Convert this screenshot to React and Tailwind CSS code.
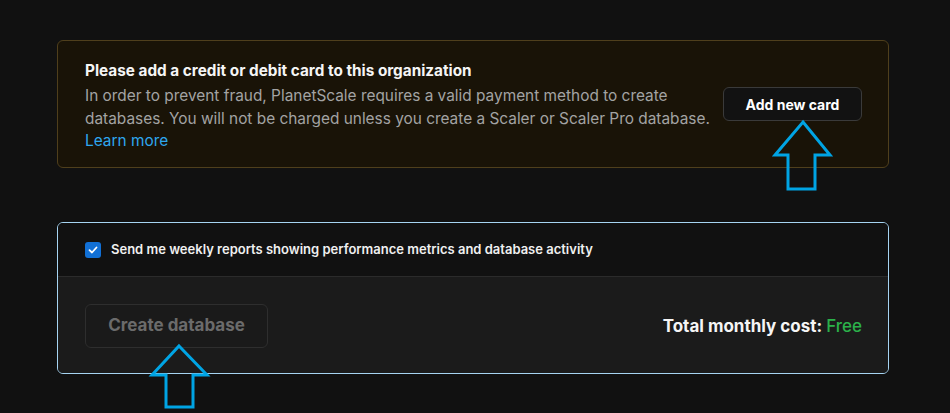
import React from "react";

function Arrow({ className, points }) {
  return (
    <svg className={className} width="950" height="413" viewBox="0 0 950 413" fill="none">
      <polygon points={points} stroke="#00a4e4" strokeWidth="3" strokeLinejoin="miter" />
    </svg>
  );
}

export default function App() {
  return (
    <div
      className="relative w-[950px] h-[413px] bg-[#111111] overflow-hidden text-white"
      style={{ fontFamily: "Inter, 'Noto Sans', sans-serif" }}
    >
      <div className="ml-[57px] w-[832px] pt-[40px] flex flex-col gap-[54px]">
        <div className="h-[128px] flex items-start justify-between rounded-md border border-[#4f3f1c] bg-[#191307] pl-[27px] pr-[26px] pt-[20px]">
          <div className="flex flex-col">
            <div className="text-[15.3px] leading-[20px] font-bold text-[#f5f5f5]">
              Please add a credit or debit card to this organization
            </div>
            <div className="mt-[4px] text-[15.4px] leading-[22.5px] text-[#a3a3a3]">
              In order to prevent fraud, PlanetScale requires a valid payment method to create
              <br />
              databases. You will not be charged unless you create a Scaler or Scaler Pro database.
            </div>
            <div className="text-[15.4px] leading-[22.5px] text-[#2ea7ef]">Learn more</div>
          </div>
          <button className="mt-[26px] h-[34px] w-[139px] rounded-md border border-[#3a3a3a] bg-[#121212] text-[14px] font-bold text-white">
            Add new card
          </button>
        </div>

        <div className="rounded-md border border-[#a6d4f2] overflow-hidden">
          <div className="h-[54px] flex items-center gap-[10px] pl-[27px] pt-[1px] bg-[#111111] border-b border-[#2b2b2b]">
            <div className="w-[16px] h-[16px] rounded-[3px] bg-[#1170d6] flex items-center justify-center">
              <svg width="10" height="10" viewBox="0 0 10 10" fill="none">
                <path d="M1.5 5.2 L4 7.5 L8.5 2.5" stroke="white" strokeWidth="1.8" strokeLinecap="round" strokeLinejoin="round" />
              </svg>
            </div>
            <span className="text-[13px] font-semibold text-[#f0f0f0]">
              Send me weekly reports showing performance metrics and database activity
            </span>
          </div>
          <div className="h-[96px] flex items-center justify-between pl-[27px] pr-[26px] pt-[1px] bg-[#1b1b1b]">
            <button className="h-[44px] w-[183px] rounded-md border border-[#2e2e2e] bg-[#1a1a1a] text-[17px] font-bold text-[#6b6b6b]">
              Create database
            </button>
            <div className="pt-[2px] text-[17px] font-bold text-[#f5f5f5]">
              Total monthly cost: <span className="text-[#2bb14a] font-medium">Free</span>
            </div>
          </div>
        </div>
      </div>

      <Arrow
        className="absolute left-0 top-0 pointer-events-none"
        points="803,122 830,155 815,155 815,189 788,189 788,155 775,155"
      />
      <Arrow
        className="absolute left-0 top-0 pointer-events-none"
        points="179,346 207,375 193,375 193,407 166,407 166,375 152,375"
      />
    </div>
  );
}
